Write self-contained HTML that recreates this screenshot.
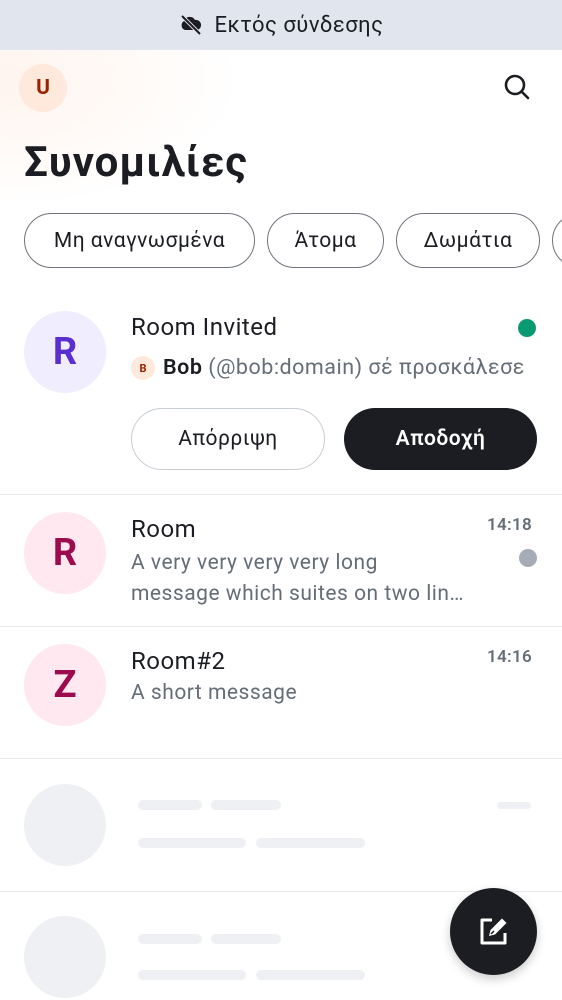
<!DOCTYPE html>
<html><head><meta charset="utf-8"><style>
*{box-sizing:border-box;margin:0;padding:0}
body{width:562px;height:1000px;overflow:hidden;background:#fff;font-family:"Roboto","Liberation Sans","DejaVu Sans",sans-serif;color:#1b1d22;position:relative;letter-spacing:0.5px}
.top{height:50px;background:#e1e6ee;display:flex;align-items:center;justify-content:center;font-size:22px;gap:12px}
.hdr{position:absolute;top:50px;left:0;width:562px;height:150px;background:radial-gradient(ellipse 300px 160px at 0 30px,#fff4ee,#fff 80%)}
.abs{position:absolute}
.chip{position:absolute;top:213px;height:55px;border:1.5px solid #6f747c;border-radius:28px;font-size:21px;display:flex;align-items:center;justify-content:center}
.av{position:absolute;width:82px;height:82px;border-radius:50%;display:flex;align-items:center;justify-content:center;font-size:38px;font-weight:bold;letter-spacing:0}
.sep{position:absolute;left:0;width:562px;height:1px;background:#e8eaee}
.t{position:absolute;font-size:24px}
.g{color:#656d77}
.sk{position:absolute;height:10px;border-radius:5px;background:#eef0f3}
</style></head><body>
<div class="top"><svg width="24" height="22" viewBox="0 0 24 22"><path d="M5 7a6 6 0 0 1 11-1 5 5 0 0 1 2 10H6A5 5 0 0 1 5 7z" fill="#1b1d22"/><path d="M3 2L21 20" stroke="#e1e6ee" stroke-width="4"/><path d="M3 2L21 20" stroke="#1b1d22" stroke-width="2"/></svg><span>Εκτός σύνδεσης</span></div>
<div class="hdr"></div>
<div class="av" style="left:19px;top:64px;width:48px;height:48px;background:#ffe8dc;color:#9b2100;font-size:21px">U</div>
<svg class="abs" style="left:503px;top:73px" width="28" height="28" viewBox="0 0 28 28"><circle cx="12" cy="12" r="9" fill="none" stroke="#1b1d22" stroke-width="2.6"/><path d="M19 19l6 6" stroke="#1b1d22" stroke-width="2.6" stroke-linecap="round"/></svg>
<div class="abs" style="left:24px;top:138px;font-size:42px;font-weight:bold;letter-spacing:1px">Συνομιλίες</div>
<div class="chip" style="left:24px;width:231px">Μη αναγνωσμένα</div>
<div class="chip" style="left:267px;width:117px">Άτομα</div>
<div class="chip" style="left:396px;width:144px">Δωμάτια</div>
<div class="chip" style="left:552px;width:60px"></div>

<div class="av" style="left:24px;top:311px;background:#f0edff;color:#5b2ed0">R</div>
<div class="t" style="left:131px;top:313px">Room Invited</div>
<div class="abs" style="left:518px;top:319px;width:18px;height:18px;border-radius:50%;background:#0a9a72"></div>
<div class="av" style="left:131px;top:356px;width:24px;height:24px;font-size:11px;background:#ffe8dc;color:#9b2100">B</div>
<div class="t g" style="left:163px;top:355px;font-size:21.5px"><span style="color:#1b1d22;font-weight:600">Bob</span> (@bob:domain) σέ προσκάλεσε</div>
<div class="abs" style="left:131px;top:408px;width:194px;height:62px;border:1.5px solid #c7ccd3;border-radius:31px;display:flex;align-items:center;justify-content:center;font-size:21px">Απόρριψη</div>
<div class="abs" style="left:344px;top:408px;width:193px;height:62px;background:#1b1d22;color:#fff;border-radius:31px;display:flex;align-items:center;justify-content:center;font-size:21px;font-weight:600">Αποδοχή</div>
<div class="sep" style="top:494px"></div>

<div class="av" style="left:24px;top:512px;background:#ffe8ef;color:#9b0b4d">R</div>
<div class="t" style="left:131px;top:515px">Room</div>
<div class="abs g" style="left:487px;top:515px;font-size:17px;font-weight:600;letter-spacing:0.3px">14:18</div>
<div class="abs" style="left:519px;top:549px;width:18px;height:18px;border-radius:50%;background:#a6acb5"></div>
<div class="t g" style="left:131px;top:548px;font-size:21px;line-height:31px;width:350px;white-space:nowrap">A very very very very long<br>message which suites on two lin…</div>
<div class="sep" style="top:626px"></div>

<div class="av" style="left:24px;top:644px;background:#ffe8ef;color:#9b0b4d">Z</div>
<div class="t" style="left:131px;top:647px">Room#2</div>
<div class="abs g" style="left:487px;top:647px;font-size:17px;font-weight:600;letter-spacing:0.3px">14:16</div>
<div class="t g" style="left:131px;top:681px;font-size:21px">A short message</div>
<div class="sep" style="top:758px"></div>

<div class="av" style="left:24px;top:784px;background:#eef0f3"></div>
<div class="sk" style="left:138px;top:800px;width:64px"></div>
<div class="sk" style="left:211px;top:800px;width:70px"></div>
<div class="sk" style="left:497px;top:802px;width:34px;height:7px"></div>
<div class="sk" style="left:138px;top:838px;width:108px"></div>
<div class="sk" style="left:256px;top:838px;width:109px"></div>
<div class="sep" style="top:891px"></div>

<div class="av" style="left:24px;top:916px;background:#eef0f3"></div>
<div class="sk" style="left:138px;top:934px;width:64px"></div>
<div class="sk" style="left:211px;top:934px;width:70px"></div>
<div class="sk" style="left:138px;top:970px;width:108px"></div>
<div class="sk" style="left:256px;top:970px;width:109px"></div>

<div class="abs" style="left:450px;top:888px;width:87px;height:87px;border-radius:50%;background:#1b1d22;box-shadow:0 4px 10px rgba(0,0,0,.2)"></div>
<svg class="abs" style="left:478px;top:915px" width="32" height="32" viewBox="0 0 32 32"><path d="M14 5H4v23h23V18" fill="none" stroke="#fff" stroke-width="3" stroke-linejoin="round"/><path d="M11 21l1.5-6L24 3.5l4.5 4.5L17 19.5z" fill="#fff"/><path d="M13 19l3-3" stroke="#1b1d22" stroke-width="1.5"/></svg>
</body></html>
